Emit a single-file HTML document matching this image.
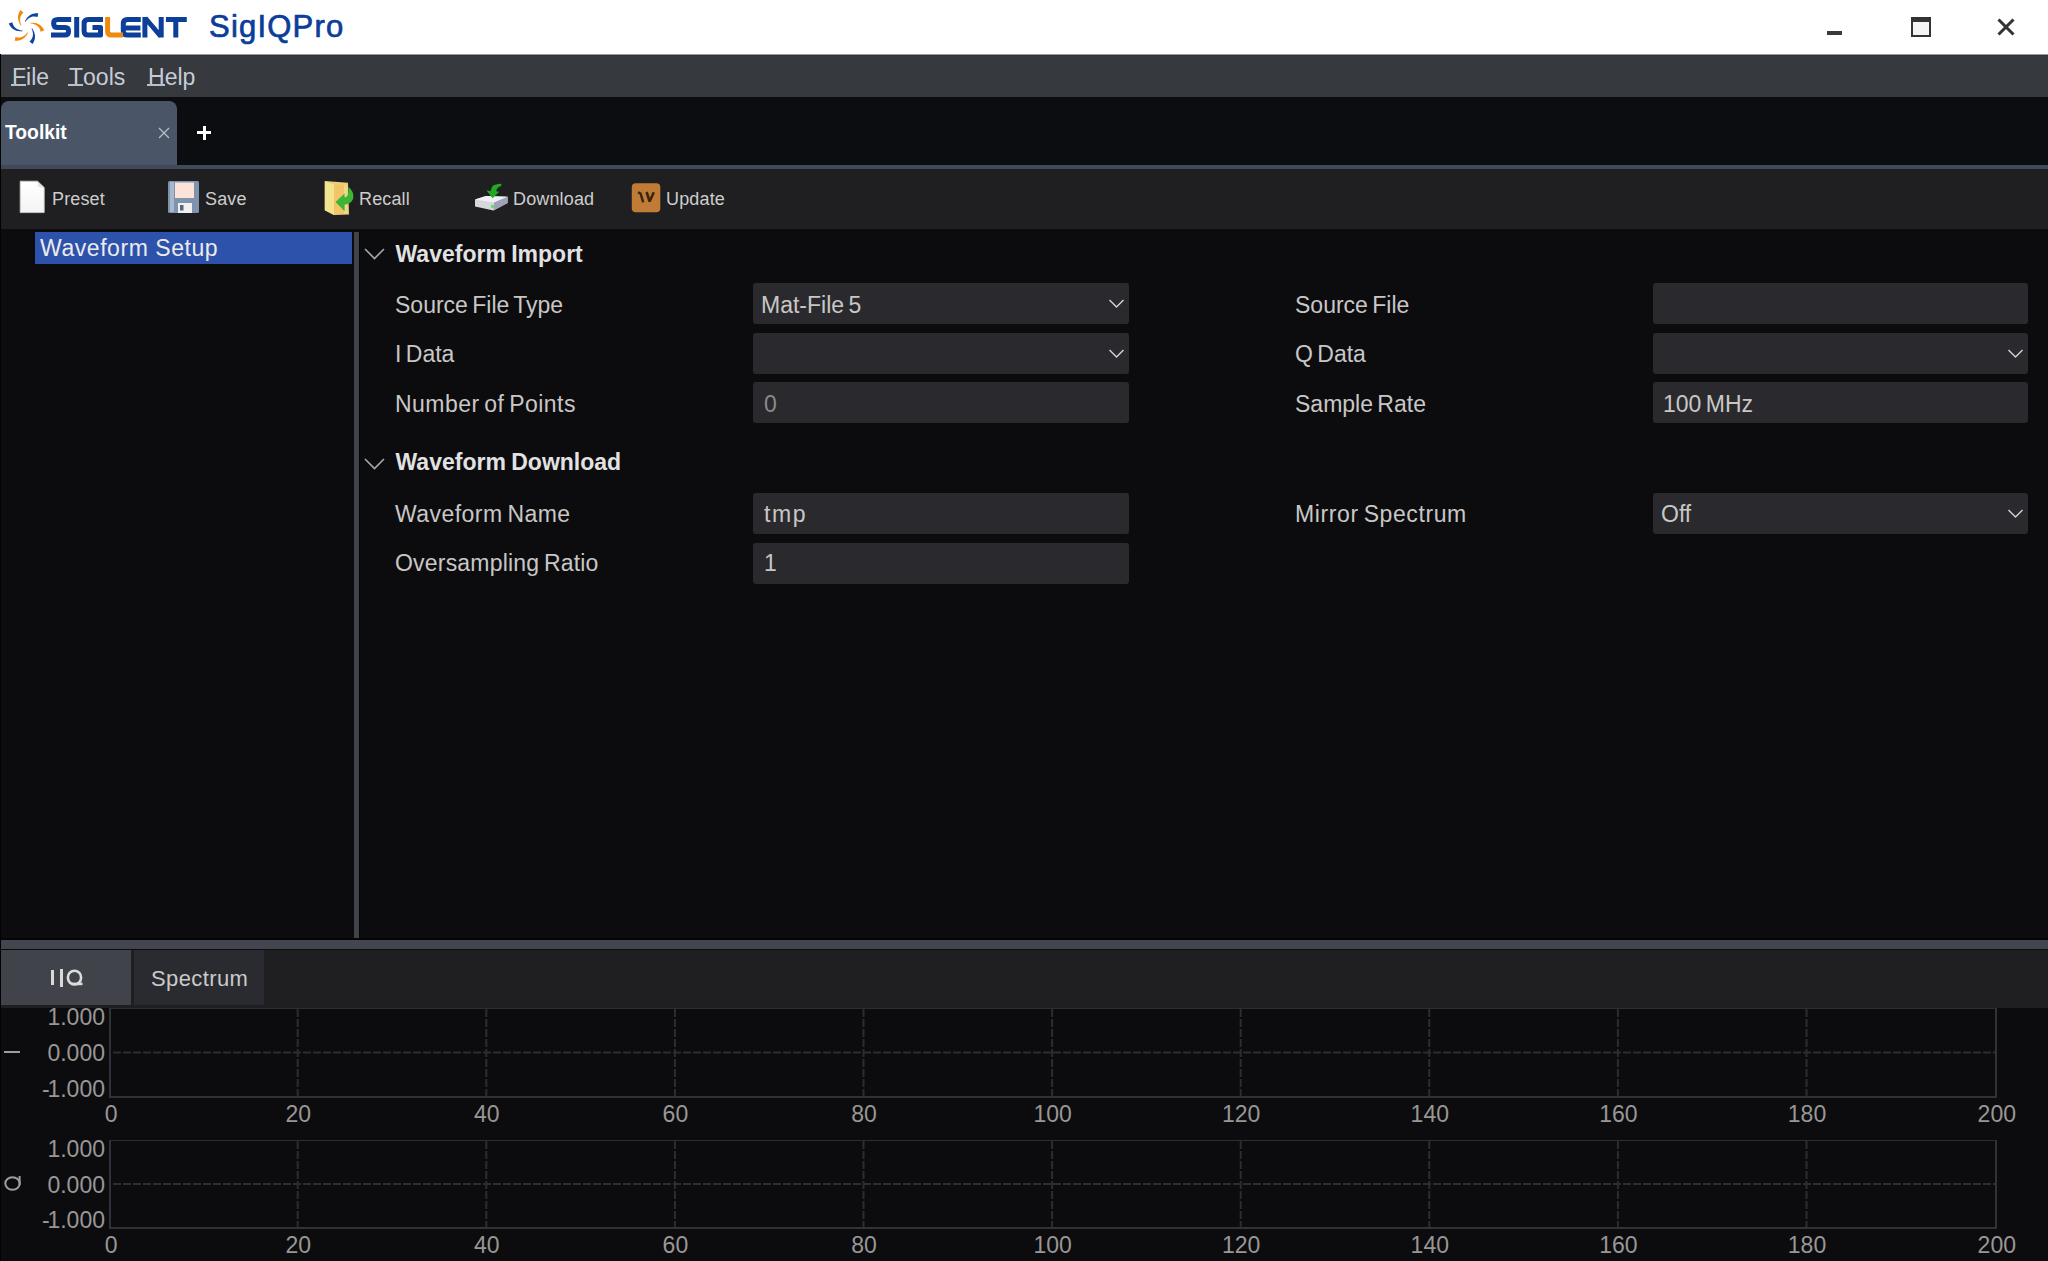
<!DOCTYPE html>
<html><head><meta charset="utf-8">
<style>
*{box-sizing:border-box;margin:0;padding:0}
html,body{width:2048px;height:1261px;overflow:hidden;background:#0c0c0f;font-family:"Liberation Sans",sans-serif}
.a{position:absolute}
.t{position:absolute;white-space:nowrap;line-height:1}
#title{left:0;top:0;width:2048px;height:54px;background:#fff}
#menu{left:0;top:54px;width:2048px;height:43px;background:#36393e;border-top:1px solid #9c9ea2;box-shadow:inset 0 1px 0 #2d3036}
#tabbar{left:0;top:97px;width:2048px;height:68px;background:#0c0d10}
#sep1{left:0;top:165px;width:2048px;height:4px;background:#3f4959}
#toolbar{left:0;top:169px;width:2048px;height:60px;background:#1f1f21}
#hsplit{left:0;top:940px;width:2048px;height:9px;background:#43464e}
#btabs{left:0;top:950px;width:2048px;height:58px;background:#1f1f21}
.menu{color:#c6ccd6;font-size:23px}
.menu u{text-decoration:none;position:relative}.menu u::after{content:"";position:absolute;left:-1px;right:0;top:20px;height:2px;background:#b8c0cc}
.tb{color:#cdcdcd;font-size:18px;letter-spacing:0.15px}
.lbl{color:#c9c7c5;font-size:23px;word-spacing:-2px}
.box{position:absolute;background:#2a2a2e;border-radius:3px;height:41px;width:376px}
.val{color:#c9c7c5;font-size:23px;word-spacing:-2px}
.sec{color:#e2e2e2;font-size:23px;font-weight:bold;word-spacing:-1px}
.ax{color:#999795;font-size:23px}
</style></head><body>
<div class="a" id="title"></div>
<div class="a" id="menu"></div>
<div class="a" id="tabbar"></div>
<div class="a" id="sep1"></div>
<div class="a" id="toolbar"></div>
<div class="a" id="hsplit"></div>
<div class="a" id="btabs"></div>

<!-- title -->
<svg class="a" style="left:0;top:0" width="200" height="54" viewBox="0 0 200 54">
 <g fill="none" stroke="#0b3f98" stroke-width="5" stroke-linejoin="round">
  <path d="M71.2 19.5 H58 Q53.6 19.5 53.6 23.4 Q53.6 27.6 58 27.6 H65.2 Q68.6 27.6 68.6 31.2 Q68.6 35 64.6 35 H51"/>
  <path d="M76.7 17 V37.5"/>
  <path d="M103 19.5 H88.2 Q84.1 19.5 84.1 23.6 V30.9 Q84.1 35 88.2 35 H100.5 V27.6 H92.5"/>
  <path d="M140.8 19.5 H127.4 Q123.3 19.5 123.3 23.6 V30.9 Q123.3 35 127.4 35 H140.8 M125 28 H140.4"/>
  <path d="M144.9 37.5 V17 M161.2 17 V37.5 M145.2 18 L160.9 36.5"/>
  <path d="M165.9 19.5 H186.8 M175.8 19.5 V37.5"/>
 </g>
 <path d="M107.6 17 V30.9 Q107.6 35 111.7 35 H123" fill="none" stroke="#ef8a10" stroke-width="5"/>
</svg>
<div class="t" style="left:209px;top:11px;font-size:31px;color:#0b3e99;letter-spacing:1.2px;-webkit-text-stroke:0.7px currentColor">SigIQPro</div>

<!-- menu -->
<div class="t menu" style="left:12px;top:66px"><u>F</u>ile</div>
<div class="t menu" style="left:69px;top:66px"><u>T</u>ools</div>
<div class="t menu" style="left:148px;top:66px"><u>H</u>elp</div>

<!-- tab -->
<div class="a" style="left:1px;top:101px;width:176px;height:64px;background:#4a5567;border-radius:8px 8px 0 0"></div>
<div class="t" style="left:5px;top:123px;font-size:19.3px;font-weight:bold;color:#fff">Toolkit</div>
<div class="a" style="left:197px;top:131px;width:14px;height:3px;background:#fff"></div><div class="a" style="left:202.5px;top:126px;width:3px;height:14px;background:#fff"></div>

<!-- toolbar -->
<div class="t tb" style="left:52px;top:190px">Preset</div>
<div class="t tb" style="left:205px;top:190px">Save</div>
<div class="t tb" style="left:359px;top:190px">Recall</div>
<div class="t tb" style="left:513px;top:190px">Download</div>
<div class="t tb" style="left:666px;top:190px">Update</div>

<!-- left panel -->
<div class="a" style="left:35px;top:232px;width:317px;height:32px;background:#2c52ac"></div>
<div class="t" style="left:40px;top:237px;font-size:23px;color:#ecebea;letter-spacing:0.55px">Waveform Setup</div>
<div class="a" style="left:354px;top:232px;width:5px;height:706px;background:#40434a"></div><div class="a" style="left:359px;top:232px;width:1px;height:706px;background:#050507"></div><div class="a" style="left:0;top:938px;width:2048px;height:2px;background:#050507"></div>

<!-- form -->
<div class="t sec" style="left:395.5px;top:243px">Waveform Import</div>
<div class="t lbl" style="left:395px;top:294px">Source File Type</div>
<div class="t lbl" style="left:395px;top:343px">I Data</div>
<div class="t lbl" style="left:395px;top:393px;letter-spacing:0.45px">Number of Points</div>
<div class="box" style="left:753px;top:283px"></div>
<div class="box" style="left:753px;top:333px"></div>
<div class="box" style="left:753px;top:382px"></div>
<div class="t val" style="left:761px;top:294px">Mat-File 5</div>
<div class="t val" style="left:764px;top:393px;color:#8a8a8a">0</div>

<div class="t lbl" style="left:1295px;top:294px">Source File</div>
<div class="t lbl" style="left:1295px;top:343px">Q Data</div>
<div class="t lbl" style="left:1295px;top:393px">Sample Rate</div>
<div class="box" style="left:1653px;top:283px;width:375px"></div>
<div class="box" style="left:1653px;top:333px;width:375px"></div>
<div class="box" style="left:1653px;top:382px;width:375px"></div>
<div class="t val" style="left:1663px;top:393px">100 MHz</div>

<div class="t sec" style="left:395.5px;top:451px">Waveform Download</div>
<div class="t lbl" style="left:395px;top:503px;letter-spacing:0.45px">Waveform Name</div>
<div class="t lbl" style="left:395px;top:552px;letter-spacing:0.2px">Oversampling Ratio</div>
<div class="box" style="left:753px;top:493px"></div>
<div class="box" style="left:753px;top:543px"></div>
<div class="t val" style="left:764px;top:503px;letter-spacing:1.6px">tmp</div>
<div class="t val" style="left:764px;top:552px">1</div>
<div class="t lbl" style="left:1295px;top:503px;letter-spacing:0.6px">Mirror Spectrum</div>
<div class="box" style="left:1653px;top:493px;width:375px"></div>
<div class="t val" style="left:1661px;top:503px">Off</div>

<svg class="a" style="left:363px;top:247px" width="24" height="14"><path d="M2 2 L11.5 11.5 L21 2" fill="none" stroke="#a8a8a8" stroke-width="1.6"/></svg>
<svg class="a" style="left:363px;top:457px" width="24" height="14"><path d="M2 2 L11.5 11.5 L21 2" fill="none" stroke="#a8a8a8" stroke-width="1.6"/></svg>
<svg class="a" style="left:1108px;top:298px" width="18" height="12"><path d="M1.5 2 L8.5 9 L15.5 2" fill="none" stroke="#d0d0d0" stroke-width="1.5"/></svg>
<svg class="a" style="left:1108px;top:348px" width="18" height="12"><path d="M1.5 2 L8.5 9 L15.5 2" fill="none" stroke="#d0d0d0" stroke-width="1.5"/></svg>
<svg class="a" style="left:2007px;top:348px" width="18" height="12"><path d="M1.5 2 L8.5 9 L15.5 2" fill="none" stroke="#d0d0d0" stroke-width="1.5"/></svg>
<svg class="a" style="left:2007px;top:508px" width="18" height="12"><path d="M1.5 2 L8.5 9 L15.5 2" fill="none" stroke="#d0d0d0" stroke-width="1.5"/></svg>
<!-- bottom tabs -->
<div class="a" style="left:1px;top:950px;width:130px;height:55px;background:#41434b"></div>
<div class="a" style="left:134px;top:950px;width:130px;height:55px;background:#2a2b30"></div>
<div class="a" style="left:51px;top:970px;width:3px;height:15px;background:#d8d8d8"></div><div class="a" style="left:59.5px;top:969px;width:3px;height:18px;background:#d8d8d8"></div><svg class="a" style="left:64px;top:967px" width="22" height="22"><ellipse cx="10.5" cy="10.6" rx="6.6" ry="6.9" fill="none" stroke="#dcdcdc" stroke-width="2.6"/><path d="M8 16.9 H18.5" stroke="#dcdcdc" stroke-width="2.6"/></svg>
<div class="t" style="left:151px;top:968px;font-size:22px;color:#cbcac8;letter-spacing:0.4px">Spectrum</div>

<svg class="a" style="left:0;top:0" width="2048" height="1261">
<line x1="297.7" y1="1009" x2="297.7" y2="1097" stroke="#2c2d32" stroke-width="2" stroke-dasharray="8 2"/>
<line x1="486.3" y1="1009" x2="486.3" y2="1097" stroke="#2c2d32" stroke-width="2" stroke-dasharray="8 2"/>
<line x1="674.9" y1="1009" x2="674.9" y2="1097" stroke="#2c2d32" stroke-width="2" stroke-dasharray="8 2"/>
<line x1="863.5" y1="1009" x2="863.5" y2="1097" stroke="#2c2d32" stroke-width="2" stroke-dasharray="8 2"/>
<line x1="1052.1" y1="1009" x2="1052.1" y2="1097" stroke="#2c2d32" stroke-width="2" stroke-dasharray="8 2"/>
<line x1="1240.7" y1="1009" x2="1240.7" y2="1097" stroke="#2c2d32" stroke-width="2" stroke-dasharray="8 2"/>
<line x1="1429.3" y1="1009" x2="1429.3" y2="1097" stroke="#2c2d32" stroke-width="2" stroke-dasharray="8 2"/>
<line x1="1617.9" y1="1009" x2="1617.9" y2="1097" stroke="#2c2d32" stroke-width="2" stroke-dasharray="8 2"/>
<line x1="1806.5" y1="1009" x2="1806.5" y2="1097" stroke="#2c2d32" stroke-width="2" stroke-dasharray="8 2"/>
<line x1="113" y1="1052.5" x2="1995" y2="1052.5" stroke="#2c2d32" stroke-width="2" stroke-dasharray="8 2"/>
<line x1="297.7" y1="1141" x2="297.7" y2="1228" stroke="#2c2d32" stroke-width="2" stroke-dasharray="8 2"/>
<line x1="486.3" y1="1141" x2="486.3" y2="1228" stroke="#2c2d32" stroke-width="2" stroke-dasharray="8 2"/>
<line x1="674.9" y1="1141" x2="674.9" y2="1228" stroke="#2c2d32" stroke-width="2" stroke-dasharray="8 2"/>
<line x1="863.5" y1="1141" x2="863.5" y2="1228" stroke="#2c2d32" stroke-width="2" stroke-dasharray="8 2"/>
<line x1="1052.1" y1="1141" x2="1052.1" y2="1228" stroke="#2c2d32" stroke-width="2" stroke-dasharray="8 2"/>
<line x1="1240.7" y1="1141" x2="1240.7" y2="1228" stroke="#2c2d32" stroke-width="2" stroke-dasharray="8 2"/>
<line x1="1429.3" y1="1141" x2="1429.3" y2="1228" stroke="#2c2d32" stroke-width="2" stroke-dasharray="8 2"/>
<line x1="1617.9" y1="1141" x2="1617.9" y2="1228" stroke="#2c2d32" stroke-width="2" stroke-dasharray="8 2"/>
<line x1="1806.5" y1="1141" x2="1806.5" y2="1228" stroke="#2c2d32" stroke-width="2" stroke-dasharray="8 2"/>
<line x1="113" y1="1184.0" x2="1995" y2="1184.0" stroke="#2c2d32" stroke-width="2" stroke-dasharray="8 2"/>
<rect x="109" y="1008" width="1888" height="1" fill="#2b2d34"/><rect x="109" y="1008" width="2" height="90" fill="#30323a"/><rect x="1995" y="1008" width="2" height="90" fill="#30323a"/><rect x="109" y="1096" width="1888" height="2" fill="#30323a"/>
<rect x="109" y="1140" width="1888" height="1" fill="#2b2d34"/><rect x="109" y="1140" width="2" height="89" fill="#30323a"/><rect x="1995" y="1140" width="2" height="89" fill="#30323a"/><rect x="109" y="1227" width="1888" height="2" fill="#30323a"/>
</svg>

<!-- window controls -->
<div class="a" style="left:1827px;top:31px;width:15px;height:4px;background:#3a3a3a"></div>
<div class="a" style="left:1911px;top:17px;width:20px;height:20px;border:2px solid #333;border-top-width:5px;background:#f4f4f4"></div>
<svg class="a" style="left:1996px;top:17px" width="20" height="20"><path d="M2.5 2.5 L17.5 17.5 M17.5 2.5 L2.5 17.5" stroke="#333" stroke-width="3"/></svg>
<!-- logo swirl -->
<svg class="a" style="left:8px;top:9px" width="38" height="38" viewBox="0 0 38 38">
  <path transform="rotate(0 18.5 18)" d="M12.56 0.96 L11.84 2.06 L11.23 3.17 L10.75 4.29 L10.38 5.43 L10.13 6.58 L10.01 7.72 L10.00 8.86 L10.11 10.00 L10.33 11.12 L10.65 12.24 L11.08 13.35 L11.60 14.45 L12.22 15.55 L12.94 16.65 L13.46 16.35 L12.97 15.18 L12.58 14.05 L12.30 12.95 L12.13 11.90 L12.05 10.88 L12.08 9.91 L12.20 8.99 L12.41 8.10 L12.70 7.26 L13.08 6.45 L13.54 5.66 L14.09 4.90 L14.72 4.16 L15.44 3.44 Z" fill="#f08a0c"/>
  <path transform="rotate(60 18.5 18)" d="M12.56 0.96 L11.84 2.06 L11.23 3.17 L10.75 4.29 L10.38 5.43 L10.13 6.58 L10.01 7.72 L10.00 8.86 L10.11 10.00 L10.33 11.12 L10.65 12.24 L11.08 13.35 L11.60 14.45 L12.22 15.55 L12.94 16.65 L13.46 16.35 L12.97 15.18 L12.58 14.05 L12.30 12.95 L12.13 11.90 L12.05 10.88 L12.08 9.91 L12.20 8.99 L12.41 8.10 L12.70 7.26 L13.08 6.45 L13.54 5.66 L14.09 4.90 L14.72 4.16 L15.44 3.44 Z" fill="#0f43a0"/>
  <path transform="rotate(120 18.5 18)" d="M12.56 0.96 L11.84 2.06 L11.23 3.17 L10.75 4.29 L10.38 5.43 L10.13 6.58 L10.01 7.72 L10.00 8.86 L10.11 10.00 L10.33 11.12 L10.65 12.24 L11.08 13.35 L11.60 14.45 L12.22 15.55 L12.94 16.65 L13.46 16.35 L12.97 15.18 L12.58 14.05 L12.30 12.95 L12.13 11.90 L12.05 10.88 L12.08 9.91 L12.20 8.99 L12.41 8.10 L12.70 7.26 L13.08 6.45 L13.54 5.66 L14.09 4.90 L14.72 4.16 L15.44 3.44 Z" fill="#f08a0c"/>
  <path transform="rotate(180 18.5 18)" d="M12.56 0.96 L11.84 2.06 L11.23 3.17 L10.75 4.29 L10.38 5.43 L10.13 6.58 L10.01 7.72 L10.00 8.86 L10.11 10.00 L10.33 11.12 L10.65 12.24 L11.08 13.35 L11.60 14.45 L12.22 15.55 L12.94 16.65 L13.46 16.35 L12.97 15.18 L12.58 14.05 L12.30 12.95 L12.13 11.90 L12.05 10.88 L12.08 9.91 L12.20 8.99 L12.41 8.10 L12.70 7.26 L13.08 6.45 L13.54 5.66 L14.09 4.90 L14.72 4.16 L15.44 3.44 Z" fill="#0f43a0"/>
  <path transform="rotate(240 18.5 18)" d="M12.56 0.96 L11.84 2.06 L11.23 3.17 L10.75 4.29 L10.38 5.43 L10.13 6.58 L10.01 7.72 L10.00 8.86 L10.11 10.00 L10.33 11.12 L10.65 12.24 L11.08 13.35 L11.60 14.45 L12.22 15.55 L12.94 16.65 L13.46 16.35 L12.97 15.18 L12.58 14.05 L12.30 12.95 L12.13 11.90 L12.05 10.88 L12.08 9.91 L12.20 8.99 L12.41 8.10 L12.70 7.26 L13.08 6.45 L13.54 5.66 L14.09 4.90 L14.72 4.16 L15.44 3.44 Z" fill="#f08a0c"/>
  <path transform="rotate(300 18.5 18)" d="M12.56 0.96 L11.84 2.06 L11.23 3.17 L10.75 4.29 L10.38 5.43 L10.13 6.58 L10.01 7.72 L10.00 8.86 L10.11 10.00 L10.33 11.12 L10.65 12.24 L11.08 13.35 L11.60 14.45 L12.22 15.55 L12.94 16.65 L13.46 16.35 L12.97 15.18 L12.58 14.05 L12.30 12.95 L12.13 11.90 L12.05 10.88 L12.08 9.91 L12.20 8.99 L12.41 8.10 L12.70 7.26 L13.08 6.45 L13.54 5.66 L14.09 4.90 L14.72 4.16 L15.44 3.44 Z" fill="#0f43a0"/>
</svg>
<!-- tab close -->
<svg class="a" style="left:158px;top:127px" width="12" height="12"><path d="M1 1 L11 11 M11 1 L1 11" stroke="#b8bcc4" stroke-width="1.3"/></svg>
<!-- preset icon -->
<svg class="a" style="left:19px;top:180px" width="27" height="35" viewBox="0 0 27 35">
 <defs><linearGradient id="pg" x1="0" y1="0" x2="0" y2="1"><stop offset="0" stop-color="#ffffff"/><stop offset="1" stop-color="#f4f4f4"/></linearGradient></defs>
 <path d="M1.2 1.2 H18.5 L25.2 7.5 V32.6 H1.2 Z" fill="url(#pg)" stroke="#c8c8c8" stroke-width="0.9"/>
 <path d="M18.2 1.5 L19 7 L24.8 7.8" fill="#e6e6e6"/>
</svg>
<!-- save icon -->
<svg class="a" style="left:168px;top:181px" width="32" height="33" viewBox="0 0 32 33">
 <rect x="0" y="0" width="31" height="32" rx="1.5" fill="#7f93ad"/>
 <rect x="2" y="1" width="4" height="30" fill="#a8b8cc"/>
 <rect x="7" y="1.5" width="19" height="15.5" fill="#fbe3da"/>
 <rect x="10" y="22" width="14" height="10" fill="#f0f0f0"/>
 <rect x="12" y="24" width="3.5" height="5.5" fill="#55657a"/>
</svg>
<!-- recall icon -->
<svg class="a" style="left:315px;top:175px" width="50" height="45" viewBox="315 175 50 45">
 <path d="M324.8 181 L348 182.8 L349 214.5 L334 215 L324.8 210.2 Z" fill="#eccf7a"/>
 <path d="M334 184.5 L347.3 184.8 L347.6 213.8 L334 214 Z" fill="#f4c468"/>
 <path d="M344 184.8 L347.3 184.8 L347.6 213.8 L344 213.9 Z" fill="#eed88c"/>
 <path d="M324.8 181 L334 184.5 L334 215 L324.8 210.2 Z" fill="#f2e48e"/>
 <path d="M335.5 202 L344.6 193.4 L344.6 197.5 Q349 197.5 348.4 187 Q354.5 191.5 353.2 198.5 Q351.5 204 344.6 204.8 L344.6 211.2 Z" fill="#3cb634"/>
</svg>
<!-- download icon -->
<svg class="a" style="left:468px;top:175px" width="50" height="45" viewBox="468 175 50 45">
 <path d="M475 199.6 L486 196 L507.6 196.8 L507.6 203 L493.5 210.6 L475 206.4 Z" fill="#d6d6dc"/>
 <path d="M475 199.6 L486 196 L507.6 196.8 L494 202.5 Z" fill="#f0f0f4"/>
 <path d="M494 202.5 L507.6 196.8 L507.6 203 L493.5 210.6 Z" fill="#9ea2b8"/>
 <rect x="491" y="205" width="2.8" height="3" fill="#66dd66"/>
 <path d="M486.5 190.6 L491 191 Q491 186 495 184.8 Q498 183.8 501.5 183.8 L501 186.2 Q497 186.6 496.2 191.3 L499.3 191.8 L492.6 198.2 Z" fill="#22a822"/>
</svg>
<!-- update icon -->
<svg class="a" style="left:625px;top:175px" width="50" height="45" viewBox="625 175 50 45">
 <rect x="631.8" y="183.2" width="28.5" height="29" rx="4" fill="#c07b37"/>
 <path d="M638 192.2 L640.6 193.6 L643.2 202.3" fill="none" stroke="#3b2610" stroke-width="2.4"/>
 <path d="M646.6 192 L649.6 201.5 L653.8 192.2" fill="none" stroke="#3b2610" stroke-width="2.6" stroke-linejoin="bevel"/>
</svg>
<!-- axis labels -->
<div class="t ax" style="right:1943px;top:1006px;text-align:right">1.000</div>
<div class="t ax" style="right:1943px;top:1042px;text-align:right">0.000</div>
<div class="t ax" style="right:1943px;top:1078px;text-align:right"><span style="letter-spacing:-2.2px">-</span>1.000</div>
<div class="t ax" style="right:1943px;top:1138px;text-align:right">1.000</div>
<div class="t ax" style="right:1943px;top:1174px;text-align:right">0.000</div>
<div class="t ax" style="right:1943px;top:1209px;text-align:right"><span style="letter-spacing:-2.2px">-</span>1.000</div>
<div class="t ax" style="left:11.2px;width:200px;text-align:center;top:1103px">0</div>
<div class="t ax" style="left:11.2px;width:200px;text-align:center;top:1234px">0</div>
<div class="t ax" style="left:198.2px;width:200px;text-align:center;top:1103px">20</div>
<div class="t ax" style="left:198.2px;width:200px;text-align:center;top:1234px">20</div>
<div class="t ax" style="left:386.8px;width:200px;text-align:center;top:1103px">40</div>
<div class="t ax" style="left:386.8px;width:200px;text-align:center;top:1234px">40</div>
<div class="t ax" style="left:575.4px;width:200px;text-align:center;top:1103px">60</div>
<div class="t ax" style="left:575.4px;width:200px;text-align:center;top:1234px">60</div>
<div class="t ax" style="left:764.0px;width:200px;text-align:center;top:1103px">80</div>
<div class="t ax" style="left:764.0px;width:200px;text-align:center;top:1234px">80</div>
<div class="t ax" style="left:952.6px;width:200px;text-align:center;top:1103px">100</div>
<div class="t ax" style="left:952.6px;width:200px;text-align:center;top:1234px">100</div>
<div class="t ax" style="left:1141.2px;width:200px;text-align:center;top:1103px">120</div>
<div class="t ax" style="left:1141.2px;width:200px;text-align:center;top:1234px">120</div>
<div class="t ax" style="left:1329.8px;width:200px;text-align:center;top:1103px">140</div>
<div class="t ax" style="left:1329.8px;width:200px;text-align:center;top:1234px">140</div>
<div class="t ax" style="left:1518.4px;width:200px;text-align:center;top:1103px">160</div>
<div class="t ax" style="left:1518.4px;width:200px;text-align:center;top:1234px">160</div>
<div class="t ax" style="left:1707.0px;width:200px;text-align:center;top:1103px">180</div>
<div class="t ax" style="left:1707.0px;width:200px;text-align:center;top:1234px">180</div>
<div class="t ax" style="left:1896.8px;width:200px;text-align:center;top:1103px">200</div>
<div class="t ax" style="left:1896.8px;width:200px;text-align:center;top:1234px">200</div>
<div class="a" style="left:4px;top:1051px;width:16px;height:2px;background:#a09e9c"></div>
<svg class="a" style="left:0;top:1170px" width="26" height="26"><ellipse cx="12.5" cy="13.5" rx="7.2" ry="6.2" fill="none" stroke="#a09e9c" stroke-width="2"/><path d="M19.6 6 V15" stroke="#a09e9c" stroke-width="2"/></svg>
<div class="a" style="left:0;top:54px;width:1px;height:1207px;background:#020203"></div>
</body></html>
